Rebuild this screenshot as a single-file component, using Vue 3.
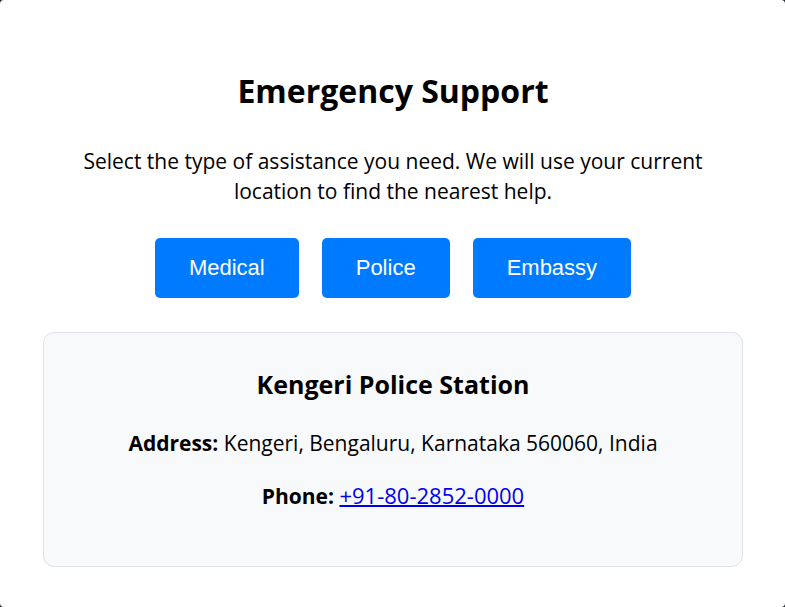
<script setup>
import { ref } from 'vue'

const services = ['Medical', 'Police', 'Embassy']
const selected = ref('Police')
</script>

<template>
  <main class="card">
    <h1>Emergency Support</h1>
    <p class="intro">
      Select the type of assistance you need. We will use your current location to find the nearest help.
    </p>
    <div class="actions">
      <button v-for="service in services" :key="service" type="button" @click="selected = service">
        {{ service }}
      </button>
    </div>
    <section class="result">
      <h2>Kengeri Police Station</h2>
      <p><strong>Address:</strong> Kengeri, Bengaluru, Karnataka 560060, India</p>
      <p><strong>Phone:</strong> <a href="tel:+918028520000">+91-80-2852-0000</a></p>
    </section>
  </main>
</template>

<style>
body {
  margin: 0;
  background: #222a33;
}
</style>

<style scoped>
.card {
  box-sizing: border-box;
  min-height: 100vh;
  padding: 69px 42px 40px 43px;
  border-radius: 4px;
  background: #fff;
  color: #000;
  font-family: "Segoe UI", "Open Sans", "Noto Sans", sans-serif;
  font-size: 21px;
  line-height: 30px;
  text-align: center;
}

h1 {
  margin: 0 0 33px;
  font-size: 32px;
  line-height: 44px;
}

.intro {
  margin: 0 0 32px;
}

.actions {
  display: flex;
  justify-content: center;
  gap: 23px;
  margin-bottom: 34px;
}

button {
  padding: 17px 34px;
  border: 0;
  border-radius: 5px;
  background: #007bff;
  color: #fff;
  font-family: "Liberation Sans", Arial, sans-serif;
  font-size: 22px;
  line-height: 26px;
  cursor: pointer;
}

.result {
  padding: 34px 34px 55px;
  border: 1px solid #dee2e6;
  border-radius: 11px;
  background: #f8f9fb;
}

h2 {
  margin: 0 0 27px;
  font-size: 25px;
  line-height: 34px;
}

.result p {
  margin: 0 0 22px;
}

.result p:last-child {
  margin-bottom: 0;
}

a {
  color: #0000ee;
  font-size: 22px;
  text-decoration-thickness: 2px;
}
</style>
